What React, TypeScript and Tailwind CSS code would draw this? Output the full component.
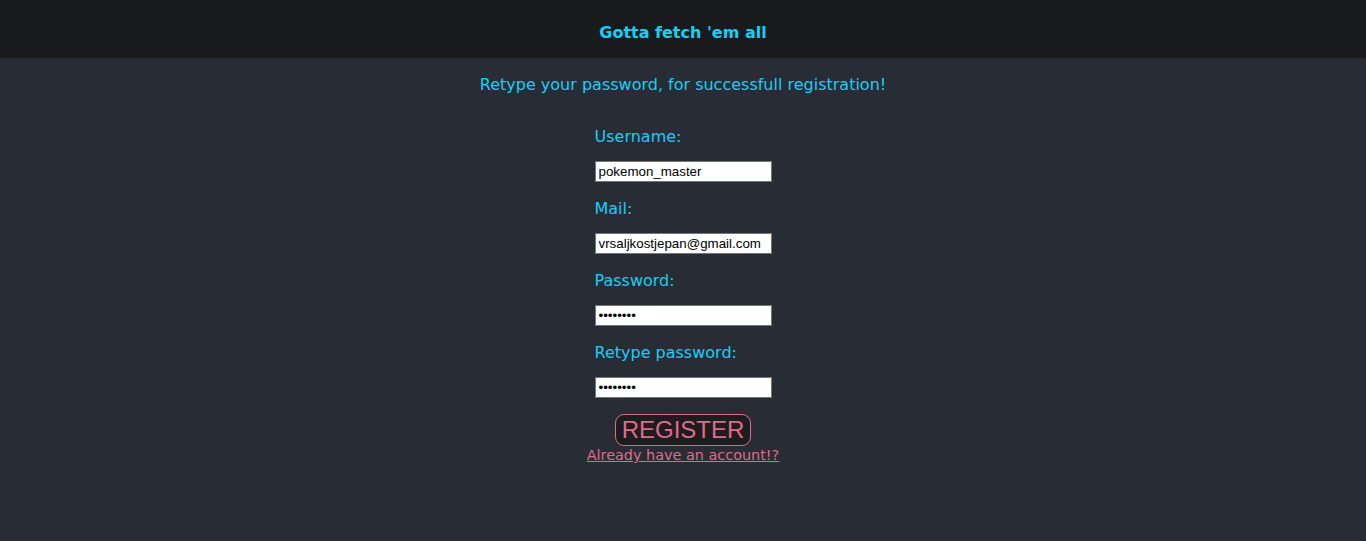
import { useState } from "react";

interface fieldProps {
  label: string;
  type: string;
  value: string;
}

const fields: fieldProps[] = [
  { label: "Username:", type: "text", value: "pokemon_master" },
  { label: "Mail:", type: "email", value: "vrsaljkostjepan@gmail.com" },
  { label: "Password:", type: "password", value: "pikachu1" },
  { label: "Retype password:", type: "password", value: "pikachu1" },
];

export default function App() {
  const [values, setValues] = useState(fields.map((f) => f.value));

  return (
    <div className="min-h-screen bg-[#282c34] font-['DejaVu_Sans',Verdana,sans-serif]">
      <header className="h-[58px] bg-[#181a1b] flex justify-center pt-[23px]">
        <h1 className="text-[16px] leading-[20px] font-bold text-[#0cd3f8]">Gotta fetch 'em all</h1>
      </header>

      <p className="mt-[17px] text-center text-[16px] leading-[19px] text-[#0cd3f8]">
        Retype your password, for successfull registration!
      </p>

      <form
        className="mt-[33px] flex flex-col items-center"
        onSubmit={(e) => e.preventDefault()}
      >
        <div className="w-[177px] flex flex-col">
          {fields.map((field, idx) => (
            <div key={idx} className="flex flex-col">
              <label className="text-[16px] leading-[20px] text-[#0cd3f8] whitespace-nowrap">
                {field.label}
              </label>
              <input
                type={field.type}
                value={values[idx]}
                onChange={(e) =>
                  setValues(values.map((v, i) => (i === idx ? e.target.value : v)))
                }
                className="mt-[14px] mb-[17px] h-[21px] w-[177px] bg-white border border-[#767676] px-[3px] text-[13.33px] text-black font-['Liberation_Sans',Arial,sans-serif] outline-none"
              />
            </div>
          ))}
        </div>

        <button
          type="submit"
          className="-mt-px h-[32px] px-[6px] bg-[#1b1d1f] border border-[#e2698a] rounded-[9px] text-[24px] leading-[28px] text-[#e2698a] font-['Liberation_Sans',Arial,sans-serif]"
        >
          REGISTER
        </button>
        <a href="#" className="text-[14.4px] leading-[18px] text-[#e2698a] underline">
          Already have an account!?
        </a>
      </form>
    </div>
  );
}
